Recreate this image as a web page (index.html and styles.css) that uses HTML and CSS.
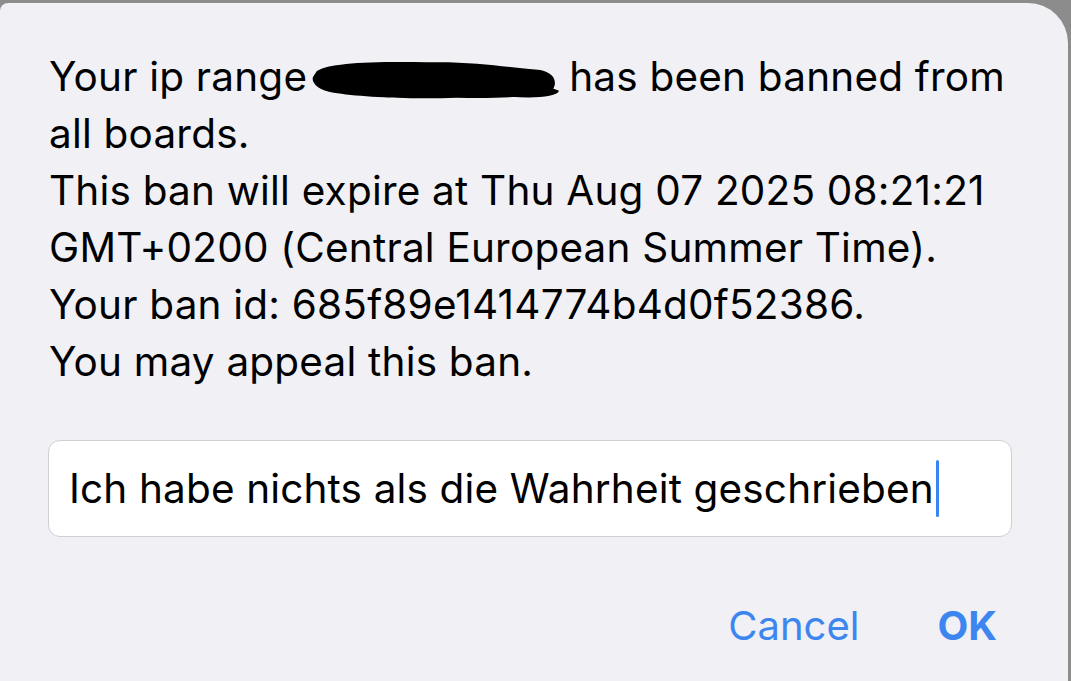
FILE: index.html
```html
<!DOCTYPE HTML>
<html lang="en-US">
<head>
	<meta charset="UTF-8">
	<title>Ban</title>
	<link rel="stylesheet" href="styles.css">
</head>
<body>
	<div class="alert">
		<div class="alert_msg">
			<p>Your ip range<svg class="redact" width="254" height="50" viewBox="0 0 258 50"><path d="M8 18 C20 10 60 8 120 9 C170 8 200 14 235 17 C250 20 252 30 248 36 C240 44 200 46 150 45 C100 47 50 44 25 40 C10 38 2 30 4 24 Z" fill="#000"/><path d="M200 36 C220 32 240 32 254 38 C252 44 230 46 205 44 Z" fill="#000"/></svg>has been banned from all boards.</p>
			<p>This ban will expire at Thu Aug 07 2025 08:21:21 GMT+0200 (Central European Summer Time).</p>
			<p>Your ban id: 685f89e1414774b4d0f52386.</p>
			<p>You may appeal this ban.</p>
		</div>
		<!-- alert_msg end -->
		<div class="alert_field">
			<span class="alert_value">Ich habe nichts als die Wahrheit geschrieben</span><span class="caret"></span>
		</div>
		<div class="alert_btns">
			<span class="btn">Cancel</span>
			<span class="btn btn_ok">OK</span>
		</div>
	</div>
	<!-- alert end -->
</body>
</html>
```

FILE: styles.css
```css
html, body {
		margin:0;
		height:100%;
		background:#8c8c8c;
	}
body {
		padding-top:3px;
		box-sizing:border-box;
		overflow:hidden;
	}
.alert {
		width:1068px;
		height:678px;
		background:#f0f0f5;
		border-radius:8px 40px 0 0;
		box-sizing:border-box;
		padding:45px 0 0 49px;
		font-family:Inter, "Liberation Sans", sans-serif;
		color:#000;
	}
.alert_msg {
		width:985px;
		font-size:40.5px;
		letter-spacing:0.2px;
		line-height:57px;
	}
.alert_msg p {
		margin:0;
	}
.redact {
		vertical-align:-12px;
		margin:0 6px 0 2px;
	}
.alert_field {
		display:flex;
		align-items:center;
		width:964px;
		height:97px;
		margin:50px 0 0 -1px;
		box-sizing:border-box;
		padding:0 0 0 20px;
		background:#fff;
		border:1px solid #cfcfd4;
		border-radius:12px;
		font-size:40.5px;
		letter-spacing:0.15px;
	}
.caret {
		display:inline-block;
		width:3px;
		height:57px;
		margin-left:2px;
		background:#3a84f2;
		border-radius:2px;
	}
.alert_btns {
		display:flex;
		justify-content:flex-end;
		gap:78px;
		width:948px;
		margin-top:64px;
		font-size:40px;
		color:#3d86f0;
	}
.btn_ok {
		font-weight:bold;
	}
```
